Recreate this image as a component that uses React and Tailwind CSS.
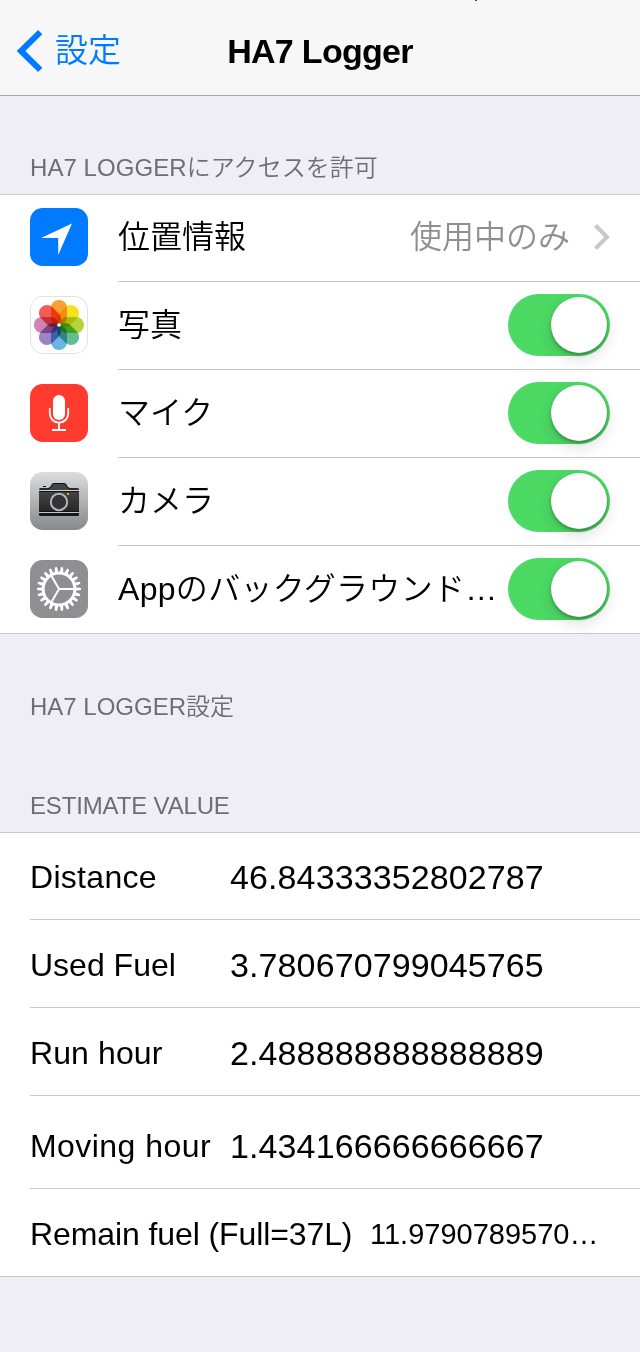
import React from "react";

const FONT = "font-['Liberation_Sans','Noto_Sans_CJK_JP',sans-serif]";

function LocationIcon() {
  return (
    <svg className="size-[58px] shrink-0" viewBox="0 0 58 58">
      <rect width="58" height="58" rx="12.5" fill="#007aff" />
      <path d="M42 15.5 28.2 47V30H11Z" fill="#fff" />
    </svg>
  );
}

const PETALS = ["#f9a12e", "#f4e21c", "#b4d63c", "#63bd93", "#6db4e6", "#9a85c4", "#cf82b4", "#f35c50"];

function PhotosIcon() {
  return (
    <svg className="size-[58px] shrink-0" viewBox="0 0 58 58">
      <rect x="0.5" y="0.5" width="57" height="57" rx="12.5" fill="#fff" stroke="#e2e2e2" />
      <g className="isolate">
        {PETALS.map((color, i) => (
          <rect
            key={color}
            x="21"
            y="4"
            width="16"
            height="24.5"
            rx="7.8"
            fill={color}
            transform={`rotate(${i * 45} 29 29)`}
            className="mix-blend-multiply"
          />
        ))}
      </g>
      <circle cx="29" cy="29" r="1.8" fill="#fff" />
    </svg>
  );
}

function MicIcon() {
  return (
    <svg className="size-[58px] shrink-0" viewBox="0 0 58 58">
      <rect width="58" height="58" rx="12.5" fill="#ff3b30" />
      <rect x="23" y="11" width="12" height="25" rx="6" fill="#fff" />
      <path d="M19.8 24v5.5a9.2 9.2 0 0 0 18.4 0V24M29 39V46M22 46h14" fill="none" stroke="#fff" strokeWidth="1.8" />
    </svg>
  );
}

function CameraIcon() {
  return (
    <svg className="size-[58px] shrink-0" viewBox="0 0 58 58">
      <defs>
        <linearGradient id="cam" x1="0" y1="0" x2="0" y2="1">
          <stop offset="0" stopColor="#dcdddf" />
          <stop offset="1" stopColor="#86888d" />
        </linearGradient>
        <linearGradient id="body" x1="0" y1="0" x2="0" y2="1">
          <stop offset="0" stopColor="#454545" />
          <stop offset="1" stopColor="#262626" />
        </linearGradient>
      </defs>
      <rect width="58" height="58" rx="12.5" fill="url(#cam)" />
      <path d="M9 18Q9 16 11 16H17.5Q19.5 16 20.5 14.3L21.5 12.5Q22.4 11 24 11H34Q35.6 11 36.5 12.5L37.5 14.3Q38.5 16 40.5 16H47Q49 16 49 18Z" fill="#444" />
      <path d="M9.5 17H18Q20 16.8 21.2 14.6L22 13Q22.6 11.5 24 11.5H34Q35.4 11.5 36 13L36.8 14.6Q38 16.8 40 17H48.5" fill="none" stroke="#111" strokeWidth="1" />
      <rect x="13" y="14" width="3" height="1" fill="#111" />
      <rect x="9" y="18" width="40" height="1" fill="#d0d1d3" />
      <rect x="9" y="19" width="40" height="21" fill="url(#body)" />
      <rect x="9" y="19" width="40" height="1" fill="#111" />
      <rect x="9" y="39" width="40" height="1" fill="#111" />
      <rect x="9" y="40" width="40" height="1" fill="#c4c5c8" />
      <path d="M9 41H49V42.5q0 1.5-1.5 1.5H10.5q-1.5 0-1.5-1.5Z" fill="#161616" />
      <circle cx="29" cy="30" r="8.2" fill="#333" stroke="#b4b5b9" strokeWidth="2" />
      <rect x="37" y="21" width="2" height="2" fill="#e0a020" />
    </svg>
  );
}

const TOOTH_COUNT = 22;
const TEETH = Array.from({ length: TOOTH_COUNT }, (_, i) => 90 + (i * 360) / TOOTH_COUNT);

function GearIcon() {
  return (
    <svg className="size-[58px] shrink-0" viewBox="0 0 58 58">
      <rect width="58" height="58" rx="12.5" fill="#8e8e93" />
      {TEETH.map((angle) => (
        <path key={angle} d="M27.2 12.5 27.9 7H30.1L30.8 12.5Z" fill="#fff" transform={`rotate(${angle} 29 29)`} />
      ))}
      <circle cx="29" cy="29" r="15.8" fill="none" stroke="#fff" strokeWidth="2.8" />
      <path d="M29 29H44M29 29 21.5 16M29 29 21.5 42" stroke="#fff" strokeWidth="2" />
    </svg>
  );
}

function Toggle() {
  return (
    <span className="flex h-[62px] w-[102px] shrink-0 items-center justify-end rounded-full bg-[#4cd964] pr-[3px]">
      <span className="size-14 rounded-full bg-white shadow-[0_6px_16px_rgba(0,0,0,0.14),0_2px_3px_rgba(0,0,0,0.3)]" />
    </span>
  );
}

function PermissionRow({ icon, label, last, children }) {
  return (
    <div className="flex h-[88px] pl-[30px]">
      <div className="flex items-center pb-0.5">{icon}</div>
      <div className={`ml-[30px] flex h-full min-w-0 flex-1 items-center justify-between pr-[30px] ${last ? "pb-0.5" : "border-b border-[#c8c7cc] pb-px"}`}>
        <span className={`whitespace-nowrap text-[32px] leading-[48px] ${last ? "tracking-[0.3px]" : ""}`}>{label}</span>
        {children}
      </div>
    </div>
  );
}

const ESTIMATES = [
  { label: "Distance", value: "46.84333352802787", row: "h-[87px]", labelW: "w-[200px]", labelS: "tracking-[0.3px]", valueS: "text-[34px] tracking-[0.11px]" },
  { label: "Used Fuel", value: "3.780670799045765", row: "h-[88px]", labelW: "w-[200px]", labelS: "tracking-[0px]", valueS: "text-[34px] tracking-[0.11px]" },
  { label: "Run hour", value: "2.488888888888889", row: "h-[88px]", labelW: "w-[200px]", labelS: "tracking-[0.1px]", valueS: "text-[34px] tracking-[0.11px]" },
  { label: "Moving hour", value: "1.434166666666667", row: "h-[93px] pt-[5px]", labelW: "w-[200px]", labelS: "tracking-[0.45px]", valueS: "text-[34px] tracking-[0.11px]" },
  { label: "Remain fuel (Full=37L)", value: "11.9790789570…", row: "h-[87px]", labelW: "w-[340px]", labelS: "tracking-[-0.1px]", valueS: "text-[29px]" },
];

const HEADING = "flex shrink-0 items-end pb-2 pl-[30px] text-[24px] leading-[36px] text-[#6d6d72]";

export default function App() {
  return (
    <div className={`${FONT} flex h-[1352px] w-[640px] flex-col overflow-hidden bg-[#efeef4] font-[350] text-black`}>
      <header className="relative grid h-24 shrink-0 grid-cols-[1fr_auto_1fr] items-center border-b border-[#a7a7aa] bg-[#f7f7f7] pt-1.5">
        <span className="absolute left-[475px] top-0 h-px w-0.5 bg-[#444]" />
        <a className="flex items-center text-[#007aff]">
          <svg className="ml-4 h-[44px] w-[27px]" viewBox="0 0 27 44">
            <path d="M24.200 3.200 5 22 24.200 40.800" fill="none" stroke="currentColor" strokeWidth="6" />
          </svg>
          <span className="ml-3 text-[33px] leading-[48px]">設定</span>
        </a>
        <h1 className="text-[34px] font-bold leading-[48px] tracking-[-0.7px]">HA7 Logger</h1>
      </header>

      <h2 className={`${HEADING} h-[98px] tracking-[0.06px]`}>HA7 LOGGERにアクセスを許可</h2>
      <section className="shrink-0 border-y border-[#c8c7cc] bg-white">
        <div className="-mt-px -mb-px">
          <PermissionRow icon={<LocationIcon />} label="位置情報">
            <span className="flex items-center text-[#8e8e93]">
              <span className="text-[32px] leading-[48px]">使用中のみ</span>
              <svg className="ml-6 h-[26px] w-4" viewBox="0 0 16 26">
                <path d="M1.5 1.5 13 13 1.5 24.5" fill="none" stroke="#c7c7cc" strokeWidth="4" />
              </svg>
            </span>
          </PermissionRow>
          <PermissionRow icon={<PhotosIcon />} label="写真"><Toggle /></PermissionRow>
          <PermissionRow icon={<MicIcon />} label="マイク"><Toggle /></PermissionRow>
          <PermissionRow icon={<CameraIcon />} label="カメラ"><Toggle /></PermissionRow>
          <PermissionRow icon={<GearIcon />} label="Appのバックグラウンド…" last><Toggle /></PermissionRow>
        </div>
      </section>

      <h2 className={`${HEADING} h-[99px]`}>HA7 LOGGER設定</h2>
      <h2 className={`${HEADING} h-[99px] tracking-[-0.15px]`}>ESTIMATE VALUE</h2>
      <section className="shrink-0 border-y border-[#c8c7cc] bg-white pl-[30px]">
        {ESTIMATES.map((e, i) => (
          <div key={e.label} className={`flex whitespace-nowrap ${e.row} ${i < 4 ? "border-b border-[#c8c7cc]" : ""}`}>
            <div className="flex items-center pt-0.5">
              <span className={`shrink-0 text-[32px] leading-[48px] ${e.labelW} ${e.labelS}`}>{e.label}</span>
              <span className={`leading-[48px] ${e.valueS}`}>{e.value}</span>
            </div>
          </div>
        ))}
      </section>
    </div>
  );
}
